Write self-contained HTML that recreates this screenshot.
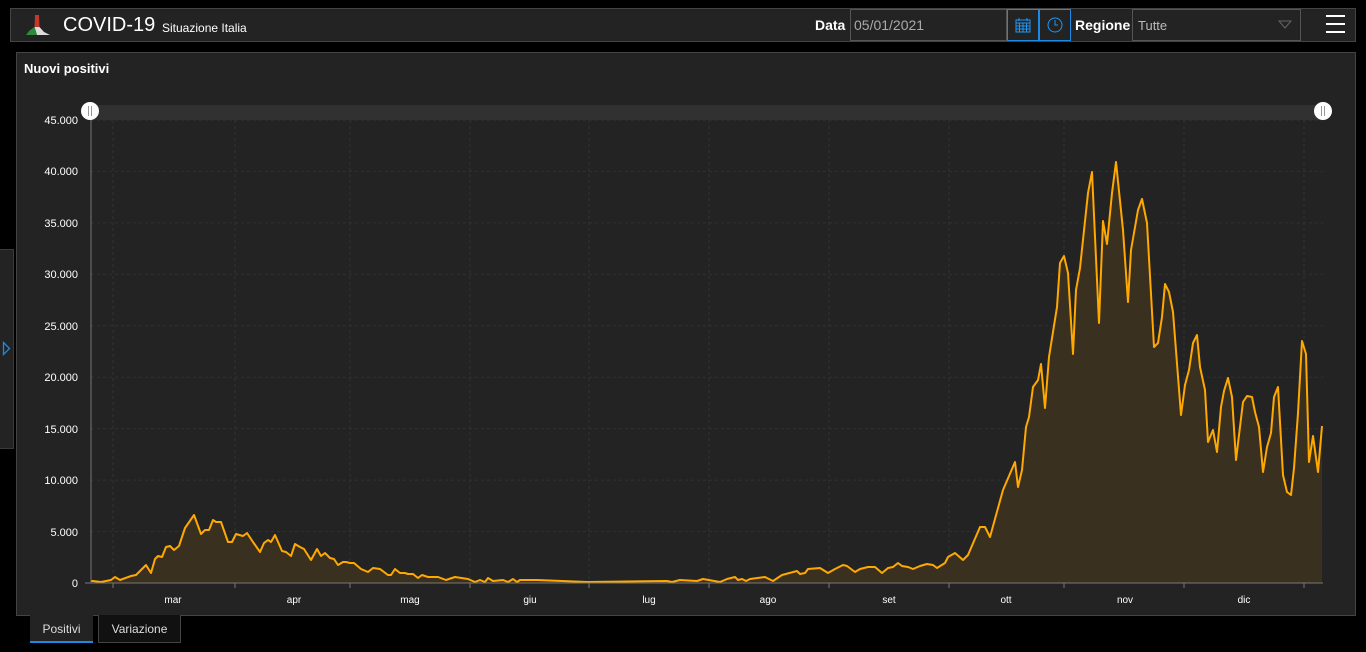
<!DOCTYPE html>
<html><head><meta charset="utf-8"><style>
*{margin:0;padding:0;box-sizing:border-box}
body{width:1366px;height:652px;background:#000;position:relative;overflow:hidden;font-family:"Liberation Sans",sans-serif;color:#fff}
.abs{position:absolute}
</style></head><body>
<div class="abs" style="left:10px;top:8px;width:1346px;height:34px;background:#232323;border:1px solid #444"></div>
<svg class="abs" style="left:24px;top:12px" width="28" height="26" viewBox="0 0 28 26">
<path d="M11 3 L15 3 L15.5 15 L10.5 15 Z" fill="#c0392b"/>
<path d="M10.5 15 L15.5 15 L20 20 L26 23 L13 23 Z" fill="#ddd"/>
<path d="M10.5 15 L13 23 L2 23 L5 19 Z" fill="#2e8b3a"/>
</svg>
<div class="abs" style="left:63px;top:14px;font-size:20px;color:#fff">COVID-19</div>
<div class="abs" style="left:162px;top:21px;font-size:12px;color:#fff">Situazione Italia</div>
<div class="abs" style="left:815px;top:17px;font-size:14px;font-weight:bold">Data</div>
<div class="abs" style="left:850px;top:9px;width:157px;height:32px;border:1px solid #555;background:#232323;color:#aaa;font-size:14px;padding:7px 3px">05/01/2021</div>
<div class="abs" style="left:1007px;top:9px;width:32px;height:32px;border:1px solid #1e88e5"></div>
<svg class="abs" style="left:1015px;top:17px" width="16" height="16" viewBox="0 0 16 16" fill="none" stroke="#2196f3" stroke-width="1"><rect x="1" y="3" width="14" height="12"/><path d="M1 6h14M1 9h14M1 12h14M4.5 6v9M8 6v9M11.5 6v9M4 1v3M12 1v3"/></svg>
<div class="abs" style="left:1039px;top:9px;width:32px;height:32px;border:1px solid #1e88e5"></div>
<svg class="abs" style="left:1047px;top:17px" width="16" height="16" viewBox="0 0 16 16" fill="none" stroke="#2196f3" stroke-width="1"><circle cx="8" cy="8" r="7"/><path d="M8 3v5h3"/></svg>
<div class="abs" style="left:1075px;top:17px;font-size:14px;font-weight:bold">Regione</div>
<div class="abs" style="left:1132px;top:9px;width:169px;height:32px;border:1px solid #555;background:#232323;color:#bbb;font-size:13px;padding:8px 5px">Tutte</div>
<svg class="abs" style="left:1278px;top:20px" width="14" height="9"><path d="M1 1h12L7 8Z" fill="none" stroke="#666"/></svg>
<div class="abs" style="left:1326px;top:15px;width:19px;height:2px;background:#fff"></div>
<div class="abs" style="left:1326px;top:23px;width:19px;height:2px;background:#fff"></div>
<div class="abs" style="left:1326px;top:31px;width:19px;height:2px;background:#fff"></div>

<div class="abs" style="left:0;top:249px;width:14px;height:200px;background:#232323;border:1px solid #3a3a3a;border-left:none"></div>
<svg class="abs" style="left:2px;top:341px" width="9" height="15"><path d="M1.5 1.5L7.5 7.5L1.5 13.5Z" fill="none" stroke="#1e88e5" stroke-width="1.3"/></svg>

<div class="abs" style="left:16px;top:52px;width:1340px;height:564px;background:#232323;border:1px solid #444"></div>
<div class="abs" style="left:24px;top:61px;font-size:13px;font-weight:bold">Nuovi positivi</div>

<svg class="abs" style="left:0;top:0" width="1366" height="652" font-family="Liberation Sans, sans-serif" font-size="11" fill="#fff">
<rect x="91" y="105" width="1232" height="15" fill="#313131"/>
<g stroke="#333" stroke-dasharray="3,3" stroke-width="1">
<path d="M91 120H1323M91 171.4H1323M91 222.9H1323M91 274.3H1323M91 325.8H1323M91 377.2H1323M91 428.7H1323M91 480.1H1323M91 531.6H1323"/>
<path d="M113 120V583M235 120V583M350 120V583M470 120V583M589 120V583M709 120V583M829 120V583M949 120V583M1064 120V583M1184 120V583M1304 120V583"/>
</g>
<g text-anchor="end">
<text x="78" y="124">45.000</text><text x="78" y="175">40.000</text><text x="78" y="227">35.000</text><text x="78" y="278">30.000</text><text x="78" y="330">25.000</text><text x="78" y="381">20.000</text><text x="78" y="433">15.000</text><text x="78" y="484">10.000</text><text x="78" y="536">5.000</text><text x="78" y="587">0</text>
</g>
<polygon fill="#3a3020" points="91,583 93,581 101,582 111,580 115,577 120,580 131,576 136,575 141,570 146,565 151,573 155,559 158,556 162,557 166,547 170,546 174,550 179,546 185,528 194,515 201,534 205,530 209,530 213,520 216,522 221,522 228,542 232,542 236,534 243,536 247,533 253,542 260,552 264,543 268,540 271,542 275,535 282,551 286,552 291,556 295,544 300,547 304,549 311,560 317,549 321,556 325,553 330,558 334,559 338,565 343,562 346,562 350,563 354,563 361,569 368,572 373,568 380,569 388,575 391,575 395,569 400,573 405,573 408,574 413,574 418,578 422,575 428,577 438,577 446,580 455,577 468,579 475,582 480,580 485,582 488,578 493,581 503,580 508,582 513,579 517,582 520,580 537,580 587,582 667,581 672,582 680,580 697,581 703,579 720,582 727,579 735,577 738,580 742,579 746,581 750,579 765,577 773,581 782,575 797,571 800,574 805,573 808,569 820,568 828,573 835,569 843,565 847,566 855,572 860,569 868,567 875,567 882,573 888,568 893,567 898,563 902,566 908,567 913,569 920,566 927,564 933,565 937,568 945,563 948,557 955,553 963,560 968,555 980,527 985,527 990,537 1003,490 1015,462 1018,487 1022,470 1026,427 1029,417 1033,387 1038,380 1041,364 1045,408 1049,357 1057,307 1060,263 1064,256 1068,273 1073,354 1076,290 1080,268 1088,193 1092,172 1099,323 1103,221 1107,244 1112,193 1116,162 1123,230 1128,302 1131,250 1138,210 1142,199 1147,223 1154,347 1158,343 1162,317 1165,284 1169,292 1173,312 1181,415 1185,385 1189,370 1193,343 1197,335 1200,367 1205,390 1208,442 1213,430 1217,452 1221,407 1224,391 1228,378 1232,397 1236,460 1243,402 1247,396 1252,397 1255,412 1259,427 1263,472 1267,447 1271,433 1274,397 1278,387 1283,475 1287,492 1291,495 1294,468 1298,413 1302,341 1306,354 1309,462 1313,436 1318,472 1322,426 1322,583"/>
<polyline fill="none" stroke="#ffa800" stroke-width="2" stroke-linejoin="round" points="91,581 93,581 101,582 111,580 115,577 120,580 131,576 136,575 141,570 146,565 151,573 155,559 158,556 162,557 166,547 170,546 174,550 179,546 185,528 194,515 201,534 205,530 209,530 213,520 216,522 221,522 228,542 232,542 236,534 243,536 247,533 253,542 260,552 264,543 268,540 271,542 275,535 282,551 286,552 291,556 295,544 300,547 304,549 311,560 317,549 321,556 325,553 330,558 334,559 338,565 343,562 346,562 350,563 354,563 361,569 368,572 373,568 380,569 388,575 391,575 395,569 400,573 405,573 408,574 413,574 418,578 422,575 428,577 438,577 446,580 455,577 468,579 475,582 480,580 485,582 488,578 493,581 503,580 508,582 513,579 517,582 520,580 537,580 587,582 667,581 672,582 680,580 697,581 703,579 720,582 727,579 735,577 738,580 742,579 746,581 750,579 765,577 773,581 782,575 797,571 800,574 805,573 808,569 820,568 828,573 835,569 843,565 847,566 855,572 860,569 868,567 875,567 882,573 888,568 893,567 898,563 902,566 908,567 913,569 920,566 927,564 933,565 937,568 945,563 948,557 955,553 963,560 968,555 980,527 985,527 990,537 1003,490 1015,462 1018,487 1022,470 1026,427 1029,417 1033,387 1038,380 1041,364 1045,408 1049,357 1057,307 1060,263 1064,256 1068,273 1073,354 1076,290 1080,268 1088,193 1092,172 1099,323 1103,221 1107,244 1112,193 1116,162 1123,230 1128,302 1131,250 1138,210 1142,199 1147,223 1154,347 1158,343 1162,317 1165,284 1169,292 1173,312 1181,415 1185,385 1189,370 1193,343 1197,335 1200,367 1205,390 1208,442 1213,430 1217,452 1221,407 1224,391 1228,378 1232,397 1236,460 1243,402 1247,396 1252,397 1255,412 1259,427 1263,472 1267,447 1271,433 1274,397 1278,387 1283,475 1287,492 1291,495 1294,468 1298,413 1302,341 1306,354 1309,462 1313,436 1318,472 1322,426"/>
<path d="M91 120V583M85 583H1323" stroke="#777" stroke-width="1"/>
<path d="M113 583v5M235 583v5M350 583v5M470 583v5M589 583v5M709 583v5M829 583v5M949 583v5M1064 583v5M1184 583v5M1304 583v5" stroke="#777"/>
<g text-anchor="middle" font-size="10">
<text x="173" y="603">mar</text><text x="294" y="603">apr</text><text x="410" y="603">mag</text><text x="530" y="603">giu</text><text x="649" y="603">lug</text><text x="768" y="603">ago</text><text x="889" y="603">set</text><text x="1006" y="603">ott</text><text x="1125" y="603">nov</text><text x="1244" y="603">dic</text>
</g>
<circle cx="90" cy="111" r="9" fill="#fff"/><path d="M88.5 106v10M91.5 106v10" stroke="#999"/>
<circle cx="1323" cy="111" r="9" fill="#fff"/><path d="M1321.5 106v10M1324.5 106v10" stroke="#999"/>
</svg>

<div class="abs" style="left:30px;top:615px;width:63px;height:28px;background:#232323;border-bottom:2px solid #1e88e5;font-size:12px;text-align:center;padding-top:7px;color:#ddd">Positivi</div>
<div class="abs" style="left:98px;top:615px;width:83px;height:28px;background:#111;border:1px solid #444;border-top:none;font-size:12px;text-align:center;padding-top:7px;color:#ddd">Variazione</div>
</body></html>
